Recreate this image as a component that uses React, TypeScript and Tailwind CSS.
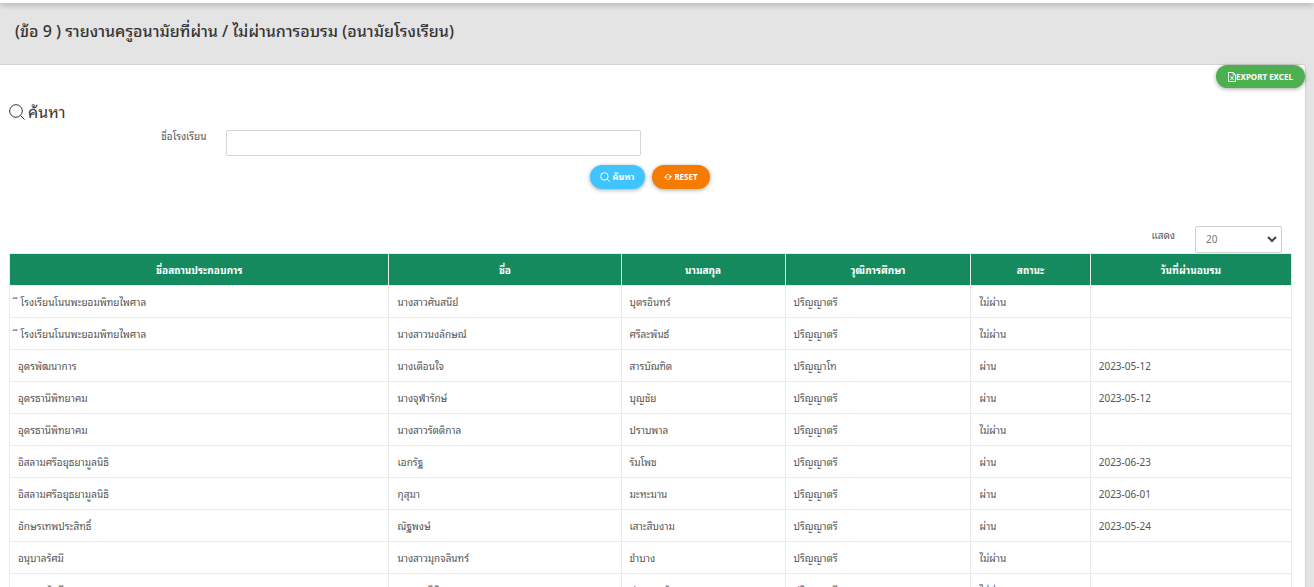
import React from "react";

type Teacher = {
  school: string;
  firstName: string;
  lastName: string;
  degree: string;
  status: string;
  date: string;
};

const columns = [
  { label: "ชื่อสถานประกอบการ", width: "w-[29.6%]" },
  { label: "ชื่อ", width: "w-[18.1%]" },
  { label: "นามสกุล", width: "w-[12.8%]" },
  { label: "วุฒิการศึกษา", width: "w-[14.5%]" },
  { label: "สถานะ", width: "w-[9.3%]" },
  { label: "วันที่ผ่านอบรม", width: "w-[15.7%]" },
];

const teachers: Teacher[] = [
  { school: "ี โรงเรียนโนนพะยอมพิทยไพศาล", firstName: "นางสาวศันสนีย์", lastName: "บุตรอินทร์", degree: "ปริญญาตรี", status: "ไม่ผ่าน", date: "" },
  { school: "ี โรงเรียนโนนพะยอมพิทยไพศาล", firstName: "นางสาวนงลักษณ์", lastName: "ศรีละพันธ์", degree: "ปริญญาตรี", status: "ไม่ผ่าน", date: "" },
  { school: "อุดรพัฒนาการ", firstName: "นางเตือนใจ", lastName: "สารบัณฑิต", degree: "ปริญญาโท", status: "ผ่าน", date: "2023-05-12" },
  { school: "อุดรธานีพิทยาคม", firstName: "นางจุฬารักษ์", lastName: "บุญชัย", degree: "ปริญญาตรี", status: "ผ่าน", date: "2023-05-12" },
  { school: "อุดรธานีพิทยาคม", firstName: "นางสาวรัตติกาล", lastName: "ปราบพาล", degree: "ปริญญาตรี", status: "ไม่ผ่าน", date: "" },
  { school: "อิสลามศรีอยุธยามูลนิธิ", firstName: "เอกรัฐ", lastName: "รัมโพช", degree: "ปริญญาตรี", status: "ผ่าน", date: "2023-06-23" },
  { school: "อิสลามศรีอยุธยามูลนิธิ", firstName: "กุสุมา", lastName: "มะหะมาน", degree: "ปริญญาตรี", status: "ผ่าน", date: "2023-06-01" },
  { school: "อักษรเทพประสิทธิ์", firstName: "ณัฐพงษ์", lastName: "เสาะสืบงาม", degree: "ปริญญาตรี", status: "ผ่าน", date: "2023-05-24" },
  { school: "อนุบาลรัศมี", firstName: "นางสาวมุกจลินทร์", lastName: "ขำบาง", degree: "ปริญญาตรี", status: "ไม่ผ่าน", date: "" },
  { school: "อนุบาลรัศมี", firstName: "นางสาวธิติมา", lastName: "ประกอบกัน", degree: "ปริญญาตรี", status: "ไม่ผ่าน", date: "" },
];

function SearchIcon({ className }: { className: string }) {
  return (
    <svg viewBox="0 0 16 16" className={className} fill="none" stroke="currentColor" aria-hidden="true">
      <circle cx="7" cy="7" r="6.3" />
      <path d="M11.5 11.5 15.6 15.6" />
    </svg>
  );
}

function SmallSearchIcon() {
  return (
    <svg viewBox="0 0 16 16" className="size-[10px]" fill="none" stroke="currentColor" strokeWidth="1.6" aria-hidden="true">
      <circle cx="7" cy="7" r="6" />
      <path d="M11.5 11.5 15.6 15.6" />
    </svg>
  );
}

function RefreshIcon() {
  return (
    <svg viewBox="0 0 16 12" className="h-[6px] w-2" fill="none" stroke="currentColor" strokeWidth="2" aria-hidden="true">
      <path d="M3 8V6a5 5 0 0 1 8.5-3.5M0 5.2 3 8.4l3-3.2M13 4v2a5 5 0 0 1-8.5 3.5M16 6.8 13 3.6l-3 3.2" />
    </svg>
  );
}

function ExcelIcon() {
  return (
    <svg viewBox="0 0 8 10" className="h-[10px] w-2" fill="none" stroke="currentColor" aria-hidden="true">
      <path d="M.5.5h4.8l2.2 2.2v6.8h-7zM5.2.5v2.4h2.3M2.3 4l3.4 4M5.7 4 2.3 8" strokeWidth=".9" />
    </svg>
  );
}

const pill =
  "flex items-center justify-center rounded-full font-bold text-white shadow-[0_1px_4px_rgba(0,0,0,0.35)]";

export default function App() {
  return (
    <div className="h-screen overflow-hidden bg-[#e4e4e4] font-['Noto_Sans','Noto_Sans_Thai_Looped','Noto_Looped_Thai','Sarabun','Loma','Garuda','Waree',sans-serif] text-[10px] text-[#555]">
      <div className="h-[3px] bg-white shadow-[0_1px_6px_rgba(0,0,0,0.4)]" />
      <header className="h-[61px] px-[15px] pt-4">
        <h1 className="text-base leading-6 font-medium text-[#333]">
          (ข้อ 9 ) รายงานครูอนามัยที่ผ่าน / ไม่ผ่านการอบรม (อนามัยโรงเรียน)
        </h1>
      </header>
      <main className="mr-2 rounded-tr border-t border-r border-[#d3d3d3] bg-white">
        <div className="flex justify-end">
          <button type="button" className={`${pill} h-[23px] w-[89px] bg-[#4caf50] text-[8px]`}>
            <ExcelIcon />
            EXPORT EXCEL
          </button>
        </div>
        <form className="pr-[14px] pl-[9px] pt-3" onSubmit={(e) => e.preventDefault()}>
          <h2 className="flex h-6 items-center gap-[3px] text-base leading-6 text-[#333]">
            <SearchIcon className="size-4" />
            ค้นหา
          </h2>
          <div className="mt-[6px] flex gap-5">
            <label htmlFor="school" className="w-[15.4%] text-right text-[10px] leading-3">
              ชื่อโรงเรียน
            </label>
            <input id="school" type="text" className="h-[26px] w-[32.3%] rounded-xs border border-[#d5d5d5] bg-white px-2" />
          </div>
          <div className="mt-[9px] flex justify-center gap-[7px]">
            <button type="submit" className={`${pill} h-6 w-[55px] gap-[2px] bg-[#40c4ff] text-[9px]`}>
              <SmallSearchIcon />
              ค้นหา
            </button>
            <button type="reset" className={`${pill} h-6 w-[58px] gap-[2px] bg-[#f57c00] text-[8px]`}>
              <RefreshIcon />
              RESET
            </button>
          </div>
        </form>
        <div className="mt-[37px] flex justify-end gap-5 pr-[23px]">
          <label htmlFor="page-size" className="pt-[3px] text-[10px] leading-3">
            แสดง
          </label>
          <div className="relative">
            <select id="page-size" className="block h-[27px] w-[87px] appearance-none rounded-xs border border-[#d0d0d0] bg-white px-[10px] text-[10px] text-[#777]">
              <option>20</option>
            </select>
            <svg viewBox="0 0 10 7" className="pointer-events-none absolute top-[10px] right-[5px] h-[7px] w-[10px]" fill="none" stroke="#444" strokeWidth="2" aria-hidden="true">
              <path d="m1 1 4 4 4-4" />
            </svg>
          </div>
        </div>
        <div className="pr-[13px] pl-[9px]">
          <table className="w-full table-fixed border-collapse">
            <thead>
              <tr className="h-8 bg-[#168a5f] text-white">
                {columns.map((c) => (
                  <th key={c.label} scope="col" className={`${c.width} border border-[#ebebeb] px-2 pt-[2px] pb-0 font-bold`}>
                    {c.label}
                  </th>
                ))}
              </tr>
            </thead>
            <tbody>
              {teachers.map((t, i) => (
                <tr key={i} className="h-8">
                  {[t.school, t.firstName, t.lastName, t.degree, t.status, t.date].map((value, j) => (
                    <td key={j} className="border border-[#ebebeb] px-2 pt-[2px] pb-0 whitespace-nowrap">
                      {value}
                    </td>
                  ))}
                </tr>
              ))}
            </tbody>
          </table>
        </div>
      </main>
    </div>
  );
}
